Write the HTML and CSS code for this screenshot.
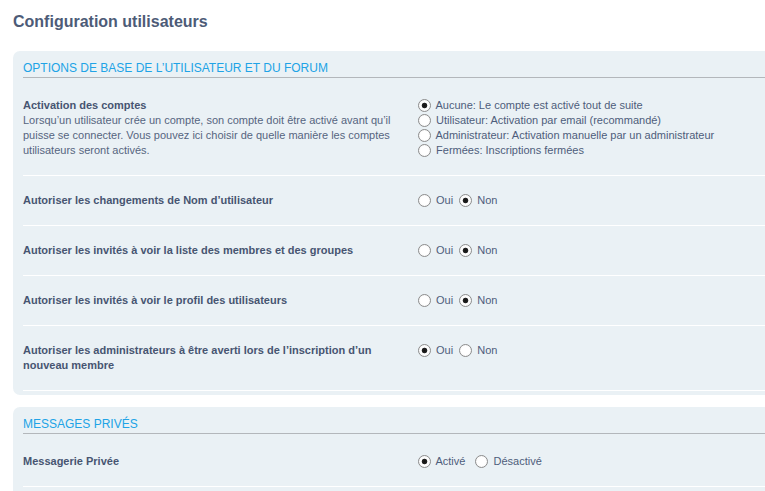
FILE: index.html
```html
<!DOCTYPE html>
<html lang="fr">
<head>
<meta charset="UTF-8" />
<title>Configuration utilisateurs</title>
<link rel="stylesheet" href="styles.css">
</head>
<body>
<h1>Configuration utilisateurs</h1>

<div class="panel">
  <div class="legend">Options de base de l’utilisateur et du forum</div>

  <dl class="first">
    <dt>
      <label>Activation des comptes</label>
      <span class="explain">Lorsqu’un utilisateur crée un compte, son compte doit être activé avant qu’il puisse se connecter. Vous pouvez ici choisir de quelle manière les comptes utilisateurs seront activés.</span>
    </dt>
    <dd>
      <label class="line"><input type="radio" class="radio" name="activation" checked /> Aucune: Le compte est activé tout de suite</label>
      <label class="line"><input type="radio" class="radio" name="activation" /> Utilisateur: Activation par email (recommandé)</label>
      <label class="line"><input type="radio" class="radio" name="activation" /> Administrateur: Activation manuelle par un administrateur</label>
      <label class="line"><input type="radio" class="radio" name="activation" /> Fermées: Inscriptions fermées</label>
    </dd>
  </dl>

  <dl>
    <dt><label>Autoriser les changements de Nom d’utilisateur</label></dt>
    <dd>
      <label><input type="radio" class="radio" name="chg_name" /> Oui</label>
      <label><input type="radio" class="radio" name="chg_name" checked /> Non</label>
    </dd>
  </dl>

  <dl>
    <dt><label>Autoriser les invités à voir la liste des membres et des groupes</label></dt>
    <dd>
      <label><input type="radio" class="radio" name="guest_list" /> Oui</label>
      <label><input type="radio" class="radio" name="guest_list" checked /> Non</label>
    </dd>
  </dl>

  <dl>
    <dt><label>Autoriser les invités à voir le profil des utilisateurs</label></dt>
    <dd>
      <label><input type="radio" class="radio" name="guest_profile" /> Oui</label>
      <label><input type="radio" class="radio" name="guest_profile" checked /> Non</label>
    </dd>
  </dl>

  <dl>
    <dt><label>Autoriser les administrateurs à être averti lors de l’inscription d’un nouveau membre</label></dt>
    <dd>
      <label><input type="radio" class="radio" name="admin_notify" checked /> Oui</label>
      <label><input type="radio" class="radio" name="admin_notify" /> Non</label>
    </dd>
  </dl>
</div>

<div class="panel last">
  <div class="legend">Messages privés</div>

  <dl class="first">
    <dt><label>Messagerie Privée</label></dt>
    <dd>
      <label class="wide"><input type="radio" class="radio" name="allow_pm" checked /> Activé</label>
      <label><input type="radio" class="radio" name="allow_pm" /> Désactivé</label>
    </dd>
  </dl>
</div>
</body>
</html>
```

FILE: styles.css
```css
body {
  margin: 0;
  padding: 0 0 0 13px;
  font-family: "Liberation Sans", Arial, sans-serif;
  font-size: 11px;
  color: #56657f;
  background: #fff;
  overflow: hidden;
}

h1 {
  margin: 0 0 19px;
  padding-top: 12px;
  font-size: 16px;
  line-height: 20px;
  font-weight: bold;
  color: #4d5b77;
}

.panel {
  background: #eaf1f5;
  border-radius: 7px 0 0 7px;
  padding: 9px 0 4px 10px;
  margin-bottom: 12px;
}

.panel.last {
  padding-bottom: 20px;
}

.legend {
  font-size: 12px;
  line-height: 16px;
  text-transform: uppercase;
  color: #20a3e6;
  padding-bottom: 1px;
  border-bottom: 1px solid #b3b7bb;
}

dl {
  display: flex;
  margin: 0;
  padding: 17px 0;
  line-height: 15px;
  border-bottom: 1px solid #fff;
}

dl.first {
  padding-top: 20px;
}

dt {
  width: 395px;
  flex-shrink: 0;
  padding-right: 10px;
  box-sizing: border-box;
}

dt label {
  display: block;
  font-weight: bold;
  color: #475571;
}

.explain {
  display: block;
}

dd {
  margin: 0;
  color: #4e5d7b;
}

dd label {
  margin-right: 3px;
}

dd label.wide {
  margin-right: 7px;
}

dd label.line {
  display: block;
}

input.radio {
  appearance: none;
  -webkit-appearance: none;
  width: 13px;
  height: 13px;
  margin: 0 2px 0 0;
  border: 1px solid #8c8c8c;
  border-radius: 50%;
  background: radial-gradient(circle, #fff 0, #fff 50%, #ececec 100%);
  vertical-align: -3px;
  box-sizing: border-box;
}

input.radio:checked {
  background: radial-gradient(circle, #111 0, #222 2.4px, #fff 3.2px, #f2f2f2 100%);
}
```
